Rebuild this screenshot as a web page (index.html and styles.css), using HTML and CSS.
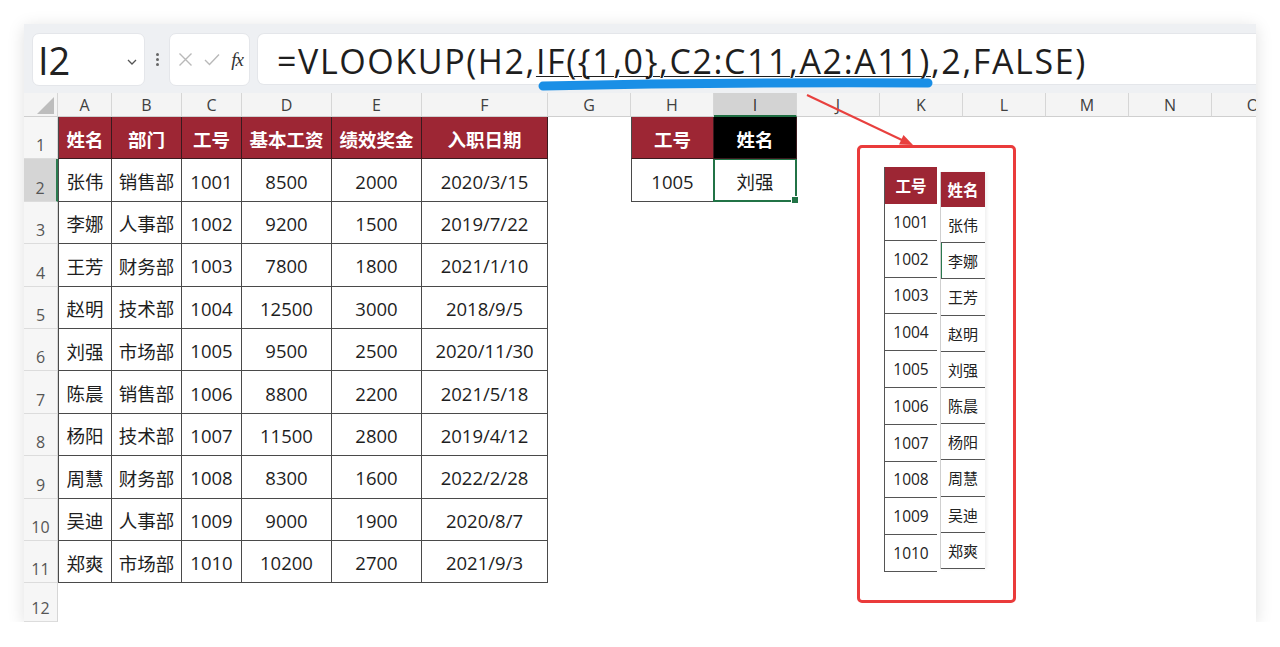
FILE: index.html
```html
<!DOCTYPE html>
<html lang="zh-CN">
<head>
<meta charset="utf-8">
<title>VLOOKUP IF</title>
<link rel="stylesheet" href="styles.css">
</head>
<body>
<div class="window">
  <div class="toolbar">
    <div class="namebox">
      <span class="ref">I2</span>
      <svg class="chev" width="10" height="6" viewBox="0 0 10 6"><path d="M1 1 L5 5 L9 1" fill="none" stroke="#555" stroke-width="1.3"/></svg>
    </div>
    <div class="dots"><i></i><i></i><i></i></div>
    <div class="fxbox">
      <svg width="15" height="15" viewBox="0 0 15 15"><path d="M1.5 1.5 L13.5 13.5 M13.5 1.5 L1.5 13.5" stroke="#b9b9b9" stroke-width="1.4" fill="none"/></svg>
      <svg width="16" height="13" viewBox="0 0 16 13"><path d="M1 7 L5.5 11.5 L15 1.5" stroke="#b9b9b9" stroke-width="1.4" fill="none"/></svg>
      <span class="fx">fx</span>
    </div>
    <div class="formula">=VLOOKUP(H2,<span class="ul">IF({1,0},C2:C11,A2:A11)</span>,2,FALSE)</div>
  </div>

  <div class="sheet">
    <div class="ch corner"><span class="tri"></span></div>
    <div class="ch">A</div><div class="ch">B</div><div class="ch">C</div><div class="ch">D</div><div class="ch">E</div><div class="ch">F</div><div class="ch">G</div><div class="ch">H</div><div class="ch sel">I</div><div class="ch">J</div><div class="ch">K</div><div class="ch">L</div><div class="ch">M</div><div class="ch">N</div><div class="ch">O</div>

    <div class="rh">1</div>
    <div class="c hd first">姓名</div><div class="c hd">部门</div><div class="c hd">工号</div><div class="c hd">基本工资</div><div class="c hd">绩效奖金</div><div class="c hd">入职日期</div>
    <div class="e"></div>
    <div class="c hd first">工号</div><div class="c hd blk">姓名</div>
    <div class="e span6"></div>

    <div class="rh selrow">2</div>
    <div class="c first">张伟</div><div class="c">销售部</div><div class="c">1001</div><div class="c">8500</div><div class="c">2000</div><div class="c">2020/3/15</div>
    <div class="e"></div>
    <div class="c first">1005</div><div class="c active">刘强<span class="handle"></span></div>
    <div class="e span6"></div>

    <div class="rh">3</div>
    <div class="c first">李娜</div><div class="c">人事部</div><div class="c">1002</div><div class="c">9200</div><div class="c">1500</div><div class="c">2019/7/22</div>
    <div class="e span9"></div>

    <div class="rh">4</div>
    <div class="c first">王芳</div><div class="c">财务部</div><div class="c">1003</div><div class="c">7800</div><div class="c">1800</div><div class="c">2021/1/10</div>
    <div class="e span9"></div>

    <div class="rh">5</div>
    <div class="c first">赵明</div><div class="c">技术部</div><div class="c">1004</div><div class="c">12500</div><div class="c">3000</div><div class="c">2018/9/5</div>
    <div class="e span9"></div>

    <div class="rh">6</div>
    <div class="c first">刘强</div><div class="c">市场部</div><div class="c">1005</div><div class="c">9500</div><div class="c">2500</div><div class="c">2020/11/30</div>
    <div class="e span9"></div>

    <div class="rh">7</div>
    <div class="c first">陈晨</div><div class="c">销售部</div><div class="c">1006</div><div class="c">8800</div><div class="c">2200</div><div class="c">2021/5/18</div>
    <div class="e span9"></div>

    <div class="rh">8</div>
    <div class="c first">杨阳</div><div class="c">技术部</div><div class="c">1007</div><div class="c">11500</div><div class="c">2800</div><div class="c">2019/4/12</div>
    <div class="e span9"></div>

    <div class="rh">9</div>
    <div class="c first">周慧</div><div class="c">财务部</div><div class="c">1008</div><div class="c">8300</div><div class="c">1600</div><div class="c">2022/2/28</div>
    <div class="e span9"></div>

    <div class="rh">10</div>
    <div class="c first">吴迪</div><div class="c">人事部</div><div class="c">1009</div><div class="c">9000</div><div class="c">1900</div><div class="c">2020/8/7</div>
    <div class="e span9"></div>

    <div class="rh">11</div>
    <div class="c first">郑爽</div><div class="c">市场部</div><div class="c">1010</div><div class="c">10200</div><div class="c">2700</div><div class="c">2021/9/3</div>
    <div class="e span9"></div>

    <div class="rh">12</div>
    <div class="e span15"></div>
  </div>

  <div class="redbox"></div>
  <div class="mini">
    <div class="mcol idcol">
      <div class="mh">工号</div>
      <div class="mc">1001</div><div class="mc">1002</div><div class="mc">1003</div><div class="mc">1004</div><div class="mc">1005</div>
      <div class="mc">1006</div><div class="mc">1007</div><div class="mc">1008</div><div class="mc">1009</div><div class="mc">1010</div>
    </div>
    <div class="mcol namecol">
      <div class="mh">姓名</div>
      <div class="mc">张伟</div><div class="mc mark">李娜</div><div class="mc">王芳</div><div class="mc">赵明</div><div class="mc">刘强</div>
      <div class="mc">陈晨</div><div class="mc">杨阳</div><div class="mc">周慧</div><div class="mc">吴迪</div><div class="mc">郑爽</div>
    </div>
  </div>

  <svg class="annot" width="1232" height="598" viewBox="0 0 1232 598">
    <path d="M519 62 Q 700 58 904 59" fill="none" stroke="#1a8fe6" stroke-width="9" stroke-linecap="round"/>
    <line x1="783" y1="71" x2="880" y2="117" stroke="#e8403e" stroke-width="2"/>
    <polygon points="889,121 875,120.5 879.5,111" fill="#e8403e"/>
  </svg>
</div>
</body>
</html>
```

FILE: styles.css
```css
html, body {
  margin: 0;
  padding: 0;
  background: #ffffff;
}

body {
  font-family: "Open Sans", "Noto Sans CJK SC", sans-serif;
  color: #222;
}

.window {
  position: relative;
  margin: 24px 0 0 24px;
  width: 1232px;
  height: 598px;
  overflow: hidden;
  background: #fff;
  box-shadow: 0 3px 16px rgba(0, 0, 0, 0.13);
}

/* ---------- toolbar ---------- */
.toolbar {
  height: 69px;
  box-sizing: border-box;
  padding: 9px 0 0 8px;
  background: #eef0f3;
  display: flex;
  align-items: flex-start;
}

.namebox {
  width: 113px;
  height: 53px;
  box-sizing: border-box;
  background: #fff;
  border: 1px solid #e4e6ea;
  border-radius: 7px;
  display: flex;
  align-items: center;
  justify-content: space-between;
  padding: 0 7px 0 5px;
}

.namebox .ref {
  font-size: 38px;
  line-height: 1;
  color: #222;
}

.chev {
  margin-top: 4px;
}

.dots {
  width: 24px;
  height: 53px;
  display: flex;
  flex-direction: column;
  align-items: center;
  justify-content: center;
  gap: 2px;
}

.dots i {
  display: block;
  width: 3px;
  height: 3px;
  border-radius: 50%;
  background: #666;
}

.fxbox {
  width: 81px;
  height: 53px;
  box-sizing: border-box;
  background: #fff;
  border: 1px solid #e4e6ea;
  border-radius: 7px;
  display: flex;
  align-items: center;
  justify-content: space-between;
  padding: 0 6px 0 8px;
}

.fx {
  font-family: "Liberation Serif", serif;
  font-style: italic;
  font-size: 19px;
  color: #333;
  letter-spacing: -1px;
}

.formula {
  margin-left: 7px;
  flex: 1;
  height: 52px;
  box-sizing: border-box;
  background: #fff;
  border: 1px solid #e4e6ea;
  border-right: none;
  border-radius: 7px 0 0 7px;
  display: flex;
  align-items: center;
  padding: 3px 0 0 19px;
  font-size: 34px;
  letter-spacing: 1.6px;
  color: #1e1e1e;
  white-space: nowrap;
}

.formula .ul {
  text-decoration: underline;
  text-decoration-thickness: 1px;
  text-underline-offset: 2px;
}

/* ---------- sheet ---------- */
.sheet {
  display: grid;
  grid-template-columns: 34px 54px 70px 60px 90px 90px 126px repeat(9, 83px);
  grid-template-rows: 24px repeat(11, 42.4px) 1fr;
  height: 529px;
  width: max-content;
}

.ch {
  background: #f4f4f4;
  border-right: 1px solid #d6d6d6;
  border-bottom: 1px solid #cfcfcf;
  box-sizing: border-box;
  display: flex;
  align-items: center;
  justify-content: center;
  font-size: 16px;
  color: #404040;
  padding-top: 1px;
}

.ch.corner {
  position: relative;
  border-right: 1px solid #d6d6d6;
}

.tri {
  position: absolute;
  right: 3px;
  bottom: 2px;
  width: 0;
  height: 0;
  border-left: 17px solid transparent;
  border-bottom: 17px solid #bdbdbd;
}

.ch.sel {
  background: #d3d3d3;
  border-bottom: 2px solid #1e6e42;
  color: #333;
}

.rh {
  background: #f6f6f6;
  border-right: 1px solid #d6d6d6;
  border-bottom: 1px solid #dcdcdc;
  box-sizing: border-box;
  display: flex;
  align-items: flex-end;
  justify-content: center;
  padding-bottom: 3px;
  font-size: 16px;
  line-height: 20px;
  color: #555;
}

.rh.selrow {
  background: #d5d5d5;
  border-right: 2px solid #2a7a4f;
}

.c {
  box-sizing: border-box;
  border-right: 1px solid #4a4a4a;
  border-bottom: 1px solid #4a4a4a;
  display: flex;
  align-items: center;
  justify-content: center;
  font-size: 18.5px;
  color: #1e1e1e;
  white-space: nowrap;
  padding-top: 2px;
  position: relative;
}

.c.first {
  border-left: 1px solid #4a4a4a;
}

.c.hd {
  background: #9d2634;
  color: #fff;
  font-weight: 700;
  font-size: 18.5px;
  border-right-color: #3a1a1e;
  border-bottom-color: #3a1a1e;
}

.c.hd.blk {
  background: #000;
}

.c.active {
  border: 2px solid #217346;
  border-top: 1px solid #217346;
  margin-left: -1px;
}

.handle {
  position: absolute;
  right: -4px;
  bottom: -4px;
  width: 6px;
  height: 6px;
  background: #217346;
  border: 1px solid #fff;
}

.e {
  background: #fff;
}

.span6 { grid-column: span 6; }
.span9 { grid-column: span 9; }
.span15 { grid-column: span 15; }

/* ---------- annotation overlay ---------- */
.redbox {
  position: absolute;
  left: 833px;
  top: 121px;
  width: 159px;
  height: 458px;
  box-sizing: border-box;
  border: 3px solid #ea3b3b;
  border-radius: 5px;
}

.mini {
  position: absolute;
  left: 860px;
  top: 143px;
  display: flex;
  align-items: flex-start;
  gap: 3px;
}

.mcol {
  display: flex;
  flex-direction: column;
}

.idcol {
  width: 52px;
  border-left: 1px solid #555;
}

.namecol {
  width: 44px;
  margin-top: 5px;
  border-left: 1px solid #cfcfcf;
  box-shadow: 2px 0 3px rgba(0, 0, 0, 0.06);
}

.mh {
  height: 37px;
  background: #9d2634;
  color: #fff;
  font-weight: 700;
  font-size: 15.5px;
  display: flex;
  align-items: center;
  justify-content: center;
}

.namecol .mh {
  height: 35px;
}

.mc {
  height: 36.8px;
  box-sizing: border-box;
  border-bottom: 1px solid #555;
  display: flex;
  align-items: center;
  justify-content: center;
  font-size: 15.5px;
  color: #222;
}

.namecol .mc {
  height: 36.2px;
  font-size: 15px;
}

.namecol .mc.mark {
  box-shadow: inset 1px 0 0 #2a7a4f;
}

.annot {
  position: absolute;
  left: 0;
  top: 0;
  pointer-events: none;
}
```
